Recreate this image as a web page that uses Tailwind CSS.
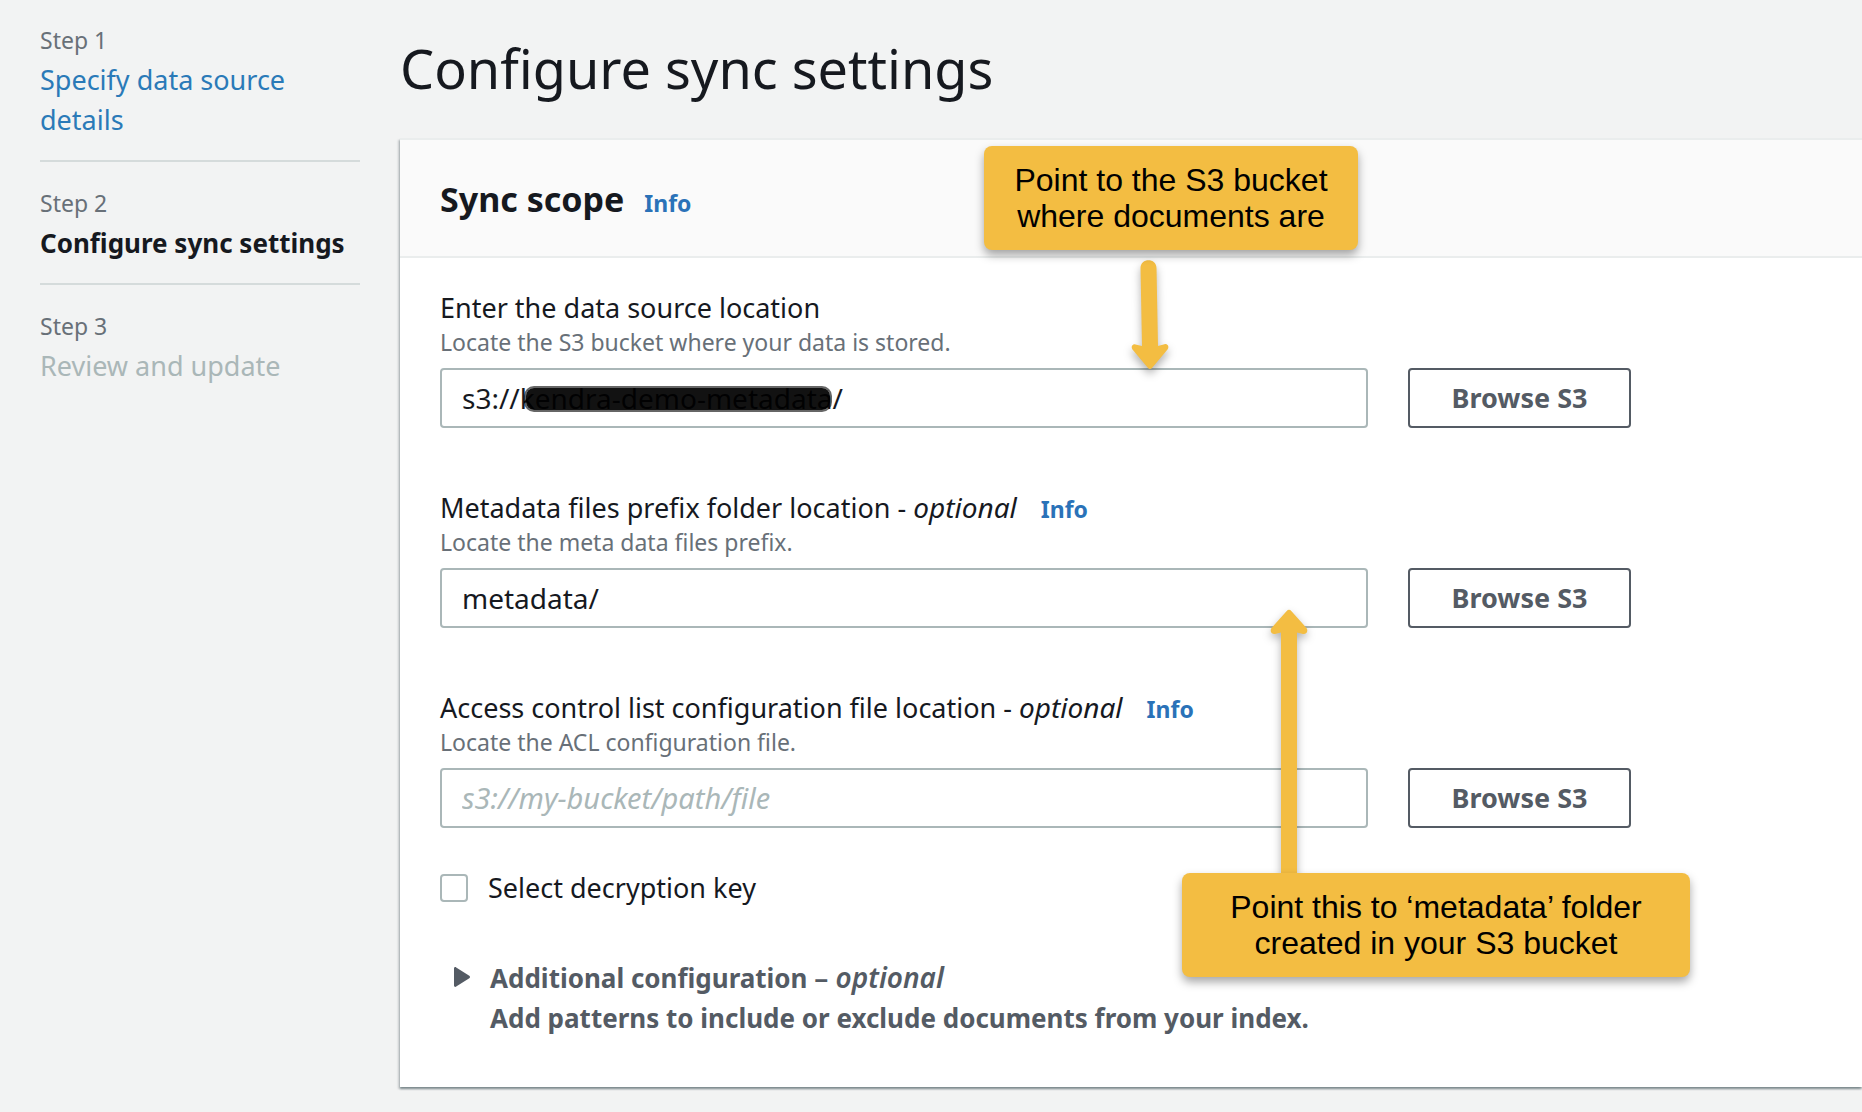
<!DOCTYPE html>
<html lang="en">
<head>
<meta charset="utf-8">
<title>Configure sync settings</title>
<script src="https://cdn.jsdelivr.net/npm/@tailwindcss/browser@4"></script>
</head>
<body class="min-h-screen overflow-x-hidden bg-[#f2f3f3] font-['Noto_Sans','Open_Sans',sans-serif] text-[27px] text-[#16191f]">
<div class="grid grid-cols-[320px_minmax(0,1fr)] gap-10 pb-6 pl-10">

  <!-- Wizard steps -->
  <nav aria-label="Steps" class="pt-6">
    <ol>
      <li class="border-b-2 border-[#d5dbdb] pb-5">
        <div class="mb-1 text-[23px] leading-8 text-[#687078]">Step 1</div>
        <a href="#" class="block leading-10 text-[#2a7ab8]">Specify data source details</a>
      </li>
      <li class="border-b-2 border-[#d5dbdb] pt-[25px] pb-5" aria-current="step">
        <div class="mb-1 text-[23px] leading-8 text-[#687078]">Step 2</div>
        <div class="text-[26px] leading-10 font-bold whitespace-nowrap">Configure sync settings</div>
      </li>
      <li class="pt-[25px]">
        <div class="mb-1 text-[23px] leading-8 text-[#687078]">Step 3</div>
        <div class="leading-10 text-[#aab7b8]">Review and update</div>
      </li>
    </ol>
  </nav>

  <main class="pt-9">
    <h1 class="mb-[38px] text-[54px] leading-16">Configure sync settings</h1>

    <section class="relative border-t-2 border-[#eaeded] bg-white shadow-[0_2px_2px_0_rgba(0,28,36,0.4),-2px_2px_2px_0_rgba(0,28,36,0.15)]">
      <header class="flex items-baseline gap-5 border-b-2 border-[#eaeded] bg-[#fafafa] px-10 pt-[37px] pb-[35px]">
        <h2 class="text-[34px] leading-11 font-bold">Sync scope</h2>
        <a href="#" class="text-[23px] leading-8 font-bold text-[#2a72b8]">Info</a>
      </header>

      <form class="pt-8 pr-[231px] pb-[49px] pl-10">
        <div class="flex flex-col gap-[62px]">
          <div>
            <label for="source" class="block leading-9">Enter the data source location</label>
            <p class="mb-[10px] text-[23px] leading-8 text-[#687078]">Locate the S3 bucket where your data is stored.</p>
            <div class="flex gap-10">
              <div class="relative min-w-0 flex-1">
                <input id="source" type="text" value="s3://kendra-demo-metadata/" class="block h-15 w-full rounded-[4px] border-2 border-[#aab7b8] bg-white px-5 text-[28px]">
                <span class="absolute top-[18px] left-[84px] h-[26px] w-[308px] rounded-[10px] border-2 border-black/60 bg-black/93 bg-clip-padding"></span>
              </div>
              <button type="button" class="h-15 w-[223px] rounded-[4px] border-2 border-[#545b64] bg-white font-bold text-[#545b64]">Browse S3</button>
            </div>
          </div>

          <div>
            <div class="flex items-baseline gap-6 leading-9">
              <label for="meta">Metadata files prefix folder location - <i class="text-[28px] leading-none">optional</i></label>
              <a href="#" class="text-[23px] leading-8 font-bold text-[#2a72b8]">Info</a>
            </div>
            <p class="mb-[10px] text-[23px] leading-8 text-[#687078]">Locate the meta data files prefix.</p>
            <div class="flex gap-10">
              <input id="meta" type="text" value="metadata/" class="block h-15 min-w-0 flex-1 rounded-[4px] border-2 border-[#aab7b8] bg-white px-5 text-[28px]">
              <button type="button" class="h-15 w-[223px] rounded-[4px] border-2 border-[#545b64] bg-white font-bold text-[#545b64]">Browse S3</button>
            </div>
          </div>

          <div>
            <div class="flex items-baseline gap-6 leading-9">
              <label for="acl">Access control list configuration file location - <i class="text-[28px] leading-none">optional</i></label>
              <a href="#" class="text-[23px] leading-8 font-bold text-[#2a72b8]">Info</a>
            </div>
            <p class="mb-[10px] text-[23px] leading-8 text-[#687078]">Locate the ACL configuration file.</p>
            <div class="flex gap-10">
              <input id="acl" type="text" placeholder="s3://my-bucket/path/file" class="block h-15 min-w-0 flex-1 rounded-[4px] border-2 border-[#aab7b8] bg-white px-5 text-[28px] placeholder:text-[29px] placeholder:text-[#aab7b8] placeholder:italic">
              <button type="button" class="h-15 w-[223px] rounded-[4px] border-2 border-[#545b64] bg-white font-bold text-[#545b64]">Browse S3</button>
            </div>
          </div>
        </div>

        <div class="mt-10 flex items-center gap-5">
          <input id="key" type="checkbox" class="size-7 appearance-none rounded-[4px] border-2 border-[#aab7b8] bg-white">
          <label for="key" class="leading-10">Select decryption key</label>
        </div>

        <button type="button" aria-expanded="false" class="mt-[50px] flex gap-5 pl-[14px] text-left text-[26px] leading-10 font-bold text-[#545b64]">
          <svg class="mt-[9px] h-5 w-4 shrink-0" viewBox="0 0 16 20" fill="currentColor" aria-hidden="true"><path d="M0 1.5C0 .3 1.2-.3 2.2.4L15.3 8.800C16.200 9.400 16.200 10.600 15.300 11.200L2.200 19.600C1.200 20.300 0 19.700 0 18.500Z"/></svg>
          <span>Additional configuration <span class="text-[28px] leading-none font-semibold">– <i>optional</i></span><br>Add patterns to include or exclude documents from your index.</span>
        </button>
      </form>

      <!-- Callouts laid over the form -->
      <svg class="pointer-events-none absolute top-[110px] left-[720px] h-[140px] w-[60px] drop-shadow-[0_5px_4px_rgba(0,0,0,0.3)]" viewBox="0 0 60 140" fill="#f3bd42" aria-hidden="true"><path d="M20.500 18C20.500 7.500 36.500 7.500 36.500 18L38 96L44.500 94.200C48 93.500 49.500 97 47.500 99.500L32 118Q30 120 28 118L12.500 99.500C10.500 97 12.500 93.500 15.500 94.500L22 96Z"/></svg>
      <div class="absolute top-[6px] left-[584px] w-[374px] rounded-[8px] bg-[#f3bd42] py-4 text-center font-['Liberation_Sans',Arial,sans-serif] text-[32px] leading-9 text-black shadow-[0_5px_10px_rgba(0,0,0,0.35)]">Point to the S3 bucket<br>where documents are</div>

      <svg class="pointer-events-none absolute top-[460px] left-[859px] h-[280px] w-[60px] drop-shadow-[0_4px_4px_rgba(0,0,0,0.3)]" viewBox="0 0 60 280" fill="#f3bd42" aria-hidden="true"><path d="M22 276V32.500L16 34C12.500 34.500 10.500 31 12.500 28L27.500 11.200Q30 8.500 32.500 11.200L47.500 28C49.500 31 47.500 34.500 44 34L38 32.500V276Z"/></svg>
      <div class="absolute top-[733px] left-[782px] w-[508px] rounded-[8px] bg-[#f3bd42] py-4 text-center font-['Liberation_Sans',Arial,sans-serif] text-[32px] leading-9 text-black shadow-[0_5px_10px_rgba(0,0,0,0.35)]">Point this to ‘metadata’ folder<br>created in your S3 bucket</div>
    </section>
  </main>
</div>
</body>
</html>
